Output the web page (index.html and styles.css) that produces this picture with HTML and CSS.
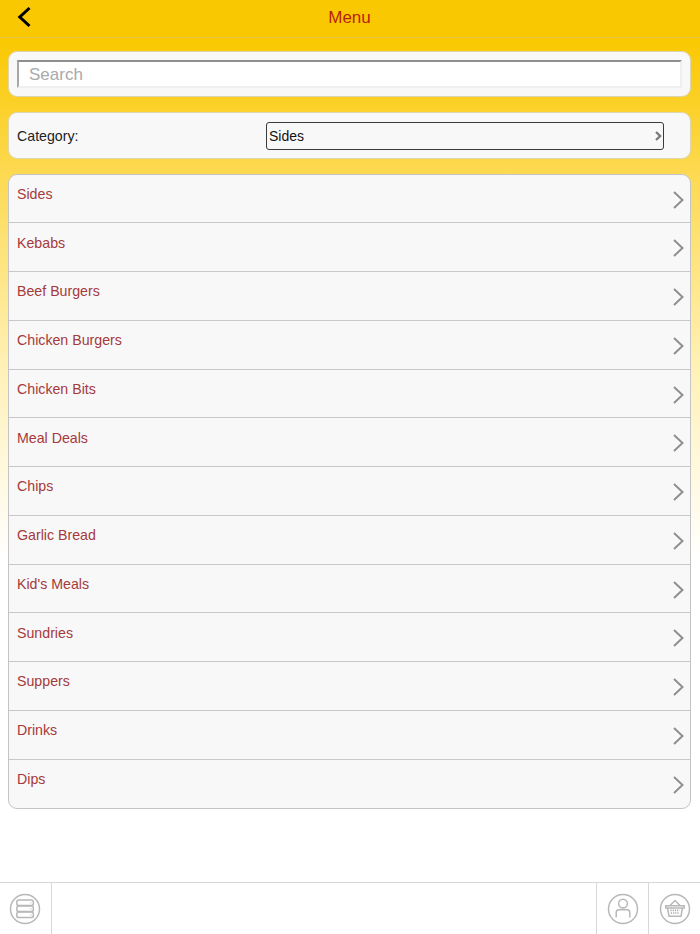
FILE: index.html
```html
<!DOCTYPE html>
<html lang="en">
<head>
<meta charset="utf-8">
<title>Menu</title>
<link rel="stylesheet" href="styles.css">
</head>
<body>
<div class="app">
  <header class="topbar">
    <button class="back" aria-label="Back">
      <svg width="16" height="24" viewBox="0 0 16 24"><path d="M13.5 3 L3.8 12 L13.5 21" fill="none" stroke="#000" stroke-width="3"/></svg>
    </button>
    <h1 class="title">Menu</h1>
  </header>
  <main class="content">
    <section class="card search-card">
      <input class="search" type="text" placeholder="Search">
    </section>
    <section class="card category-card">
      <span class="category-label">Category:</span>
      <div class="select">
        <span>Sides</span>
        <svg width="10" height="14" viewBox="0 0 10 14"><path d="M3 3 L7.2 7 L3 11" fill="none" stroke="#777" stroke-width="2.2"/></svg>
      </div>
    </section>
    <ul class="list">
      <li class="row"><span>Sides</span><svg class="chev" width="14" height="20" viewBox="0 0 14 20"><path d="M3 2 L11.5 10 L3 18" fill="none" stroke="#8f8f8f" stroke-width="2"/></svg></li>
      <li class="row"><span>Kebabs</span><svg class="chev" width="14" height="20" viewBox="0 0 14 20"><path d="M3 2 L11.5 10 L3 18" fill="none" stroke="#8f8f8f" stroke-width="2"/></svg></li>
      <li class="row"><span>Beef Burgers</span><svg class="chev" width="14" height="20" viewBox="0 0 14 20"><path d="M3 2 L11.5 10 L3 18" fill="none" stroke="#8f8f8f" stroke-width="2"/></svg></li>
      <li class="row"><span>Chicken Burgers</span><svg class="chev" width="14" height="20" viewBox="0 0 14 20"><path d="M3 2 L11.5 10 L3 18" fill="none" stroke="#8f8f8f" stroke-width="2"/></svg></li>
      <li class="row"><span>Chicken Bits</span><svg class="chev" width="14" height="20" viewBox="0 0 14 20"><path d="M3 2 L11.5 10 L3 18" fill="none" stroke="#8f8f8f" stroke-width="2"/></svg></li>
      <li class="row"><span>Meal Deals</span><svg class="chev" width="14" height="20" viewBox="0 0 14 20"><path d="M3 2 L11.5 10 L3 18" fill="none" stroke="#8f8f8f" stroke-width="2"/></svg></li>
      <li class="row"><span>Chips</span><svg class="chev" width="14" height="20" viewBox="0 0 14 20"><path d="M3 2 L11.5 10 L3 18" fill="none" stroke="#8f8f8f" stroke-width="2"/></svg></li>
      <li class="row"><span>Garlic Bread</span><svg class="chev" width="14" height="20" viewBox="0 0 14 20"><path d="M3 2 L11.5 10 L3 18" fill="none" stroke="#8f8f8f" stroke-width="2"/></svg></li>
      <li class="row"><span>Kid's Meals</span><svg class="chev" width="14" height="20" viewBox="0 0 14 20"><path d="M3 2 L11.5 10 L3 18" fill="none" stroke="#8f8f8f" stroke-width="2"/></svg></li>
      <li class="row"><span>Sundries</span><svg class="chev" width="14" height="20" viewBox="0 0 14 20"><path d="M3 2 L11.5 10 L3 18" fill="none" stroke="#8f8f8f" stroke-width="2"/></svg></li>
      <li class="row"><span>Suppers</span><svg class="chev" width="14" height="20" viewBox="0 0 14 20"><path d="M3 2 L11.5 10 L3 18" fill="none" stroke="#8f8f8f" stroke-width="2"/></svg></li>
      <li class="row"><span>Drinks</span><svg class="chev" width="14" height="20" viewBox="0 0 14 20"><path d="M3 2 L11.5 10 L3 18" fill="none" stroke="#8f8f8f" stroke-width="2"/></svg></li>
      <li class="row"><span>Dips</span><svg class="chev" width="14" height="20" viewBox="0 0 14 20"><path d="M3 2 L11.5 10 L3 18" fill="none" stroke="#8f8f8f" stroke-width="2"/></svg></li>
    </ul>
  </main>
  <footer class="tabbar">
    <div class="tab tab-left">
      <svg width="32" height="32" viewBox="0 0 32 32" fill="none" stroke="#b8b8b8" stroke-width="1.5"><circle cx="16" cy="16" r="14.5"/><rect x="7.8" y="7" width="16.6" height="5.6" rx="2.2"/><rect x="7.8" y="13" width="16.6" height="5.6" rx="2.2"/><rect x="7.8" y="19" width="16.6" height="5.6" rx="2.2"/><path d="M21.5 9.8h.8M21.5 15.8h.8M21.5 21.8h.8"/></svg>
    </div>
    <div class="tab-space"></div>
    <div class="tab">
      <svg width="32" height="32" viewBox="0 0 32 32" fill="none" stroke="#b8b8b8" stroke-width="1.5"><circle cx="16" cy="16" r="14.5"/><circle cx="16" cy="10.6" r="4.4"/><path d="M9.2 24.5 V19.5 Q9.2 16.8 12 16.8 H20 Q22.8 16.8 22.8 19.5 V24.5"/></svg>
    </div>
    <div class="tab">
      <svg width="32" height="32" viewBox="0 0 32 32" fill="none" stroke="#b8b8b8" stroke-width="1.5"><circle cx="16" cy="16" r="14.5"/><path d="M11 12.5 L16 7.5 L21 12.5"/><path d="M6.8 12.8 H25.2 V15 H6.8 Z"/><path d="M8.5 15 L10 23.2 H22 L23.5 15"/><path d="M11.5 17.4 H20.5 M11.8 20 H20.2" stroke="#a8a8a8" stroke-width="1.6" stroke-dasharray="1.2 1"/></svg>
    </div>
  </footer>
</div>
</body>
</html>
```
FILE: styles.css
```css
* { box-sizing: border-box; }
html, body { margin: 0; padding: 0; }
body {
  font-family: "Liberation Sans", Arial, sans-serif;
  background: #fff;
  color: #222;
}
.app {
  width: 700px;
  height: 934px;
  display: flex;
  flex-direction: column;
  overflow: hidden;
  background: linear-gradient(to bottom, #fac800 0, #fac800 38px, #fcd94f 170px, #fff1b8 370px, #ffffff 560px);
}
.topbar {
  height: 38px;
  flex: none;
  display: flex;
  align-items: center;
  justify-content: center;
  position: relative;
  padding: 0 1px 2px 0;
  background: #fac800;
  border-bottom: 1px solid #e2c24e;
}
.back {
  position: absolute;
  left: 16px;
  top: 5px;
  width: 16px;
  height: 24px;
  padding: 0;
  border: 0;
  background: none;
  display: block;
}
.back svg { display: block; }
.title {
  margin: 0;
  font-size: 17px;
  font-weight: 400;
  color: #b5240f;
}
.content {
  flex: 1;
  padding: 13px 9px 0 8px;
  display: flex;
  flex-direction: column;
}
.card {
  background: #f8f8f9;
  border: 1px solid #ddd5b0;
  border-radius: 9px;
}
.search-card {
  height: 46px;
  padding: 8px 8px 0;
  margin-bottom: 15px;
}
.search {
  display: block;
  width: 100%;
  height: 28px;
  padding: 1px 10px 0;
  background: #fff;
  border-style: solid;
  border-width: 2px;
  border-color: #8f8f8f #efefef #efefef #a8a8a8;
  font: 17px "Liberation Sans", Arial, sans-serif;
  outline: 0;
}
.search::placeholder { color: #a9a9a9; opacity: 1; }
.category-card {
  height: 47px;
  padding: 9px 26px 0 8px;
  margin-bottom: 15px;
  display: flex;
  align-items: flex-start;
}
.category-label {
  width: 249px;
  font-size: 14.2px;
  line-height: 28px;
  color: #222;
  flex: none;
}
.select {
  flex: 1;
  height: 28px;
  border: 1px solid #3a3a3a;
  border-radius: 3px;
  padding: 0 0 0 2px;
  display: flex;
  align-items: center;
  justify-content: space-between;
  font-size: 14px;
  color: #111;
}
.list {
  list-style: none;
  margin: 0;
  padding: 0;
  height: 635px;
  background: #f8f8f9;
  border: 1px solid #c4c4c4;
  border-radius: 9px;
  overflow: hidden;
}
.row {
  height: 48.75px;
  padding: 10.35px 5px 0 8px;
  display: flex;
  justify-content: space-between;
  align-items: flex-start;
  border-bottom: 1px solid #c8c8c8;
  font-size: 14.2px;
  line-height: 18px;
  color: #a53a3a;
}
.row:first-child { height: 48.4px; }
.row:last-child { border-bottom: 0; }
.chev { margin-top: 4.65px; display: block; }
.tabbar {
  height: 52px;
  flex: none;
  display: flex;
  background: #fff;
  border-top: 1px solid #d8d8d8;
}
.tab {
  width: 52px;
  flex: none;
  display: flex;
  align-items: center;
  justify-content: center;
  border-left: 1px solid #d8d8d8;
}
.tab-left { border-left: 0; border-right: 1px solid #d8d8d8; padding-right: 1px; }
.tab-space { flex: 1; }
```
